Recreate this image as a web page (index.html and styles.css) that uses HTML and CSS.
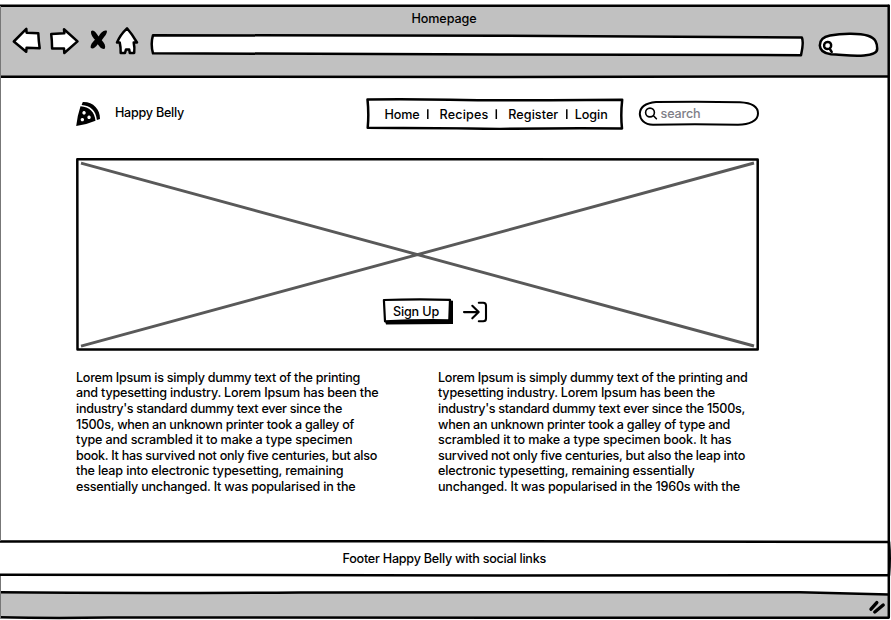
FILE: index.html
```
<!DOCTYPE html>
<html lang="en">
<head>
<meta charset="utf-8">
<title>Homepage</title>
<link rel="stylesheet" href="styles.css">
</head>
<body>
<div class="window">
  <header class="chrome">
    <svg class="outline" viewBox="0 4 891 75"><path class="gray" d="M0 6H888V77H0Z"/><path class="ink" d="M0 5.7H888.5M0 76.7Q200 77.5 500 76.9L888 76.4"/></svg>
    <div class="title"><span data-fit="65">Homepage</span></div>
    <div class="toolbar">
      <svg class="back" viewBox="11 26 31 30"><path class="shape" d="M13.8 41.5L26.3 28.8L26.6 32.7L38.3 33.3Q38.6 41 39.7 48.2L26.6 47.7L26.2 51.8Z"/></svg>
      <svg class="forward" viewBox="49 26 31 30"><path class="shape" d="M51.2 34L64.3 33.3L64 29.2L77.5 41.4L64.3 53L64 48.5L52.1 48.5Q52 40 51.2 34Z"/></svg>
      <svg class="stop" viewBox="90 29 18 21"><path d="M91.2 31C93.5 29 96 32.5 98.6 36.6C101 32 104 29.5 106.9 30.8C107.4 34 104 37 101.8 40.2C104.5 43 106 46 104.8 48.8C101.5 49.6 99.5 46.5 97.7 44.2C95.5 47.5 93 49.3 90.8 48C90.2 44.5 92.8 42 95 39.8C92.3 37 90.4 33.5 91.2 31Z"/></svg>
      <svg class="home" viewBox="115 26 24 30"><path class="shape" d="M127 28.3Q132 34 137 42.5L133.7 42.6Q134.8 47 134.2 53L129.8 53L129.2 49.4L126 49.4L125 53L120.7 53Q120.8 47 119.7 42.4L117 42.5Q120 35 127 28.3Z"/></svg>
      <svg class="address" viewBox="150 32 655 26"><path class="shape" d="M153 35.2L500 35.8Q650 36.3 801.8 37.4Q804 42 801 55.2Q620 55.3 500 54.4Q300 53.2 153 53.3Q150.4 44 153 35.2Z"/></svg>
      <svg class="quick" viewBox="817 31 63 28"><path class="shape" d="M830 35.5C843 33.1 860 33.4 868 35.8C876 38.5 877 43 877.2 48.5C877.5 53 872 54.8 864 55.4C852 56.5 841 54.4 831 54.3C824 53.5 820 50 819.8 45.4C819.7 40 824 36.7 830 35.5Z"/><path class="glass" d="M828 42.1C825 41.9 823.7 43.9 824.2 46.5C825 49.9 830 49.7 831 46.5C831.5 43.9 830.5 42.1 828 42.1M829.5 48.5L831.7 51.9"/></svg>
    </div>
  </header>

  <main class="page">
    <div class="masthead">
      <svg class="logo" viewBox="76 101 25 26"><path d="M82.8 101.9C93 101.5 100.3 109 100 119L96.9 119.9C96 110.5 90.5 105.6 81.6 104.9Z"/><path fill-rule="evenodd" d="M80.5 106.2C89.5 106.8 94.8 112 95.5 120.8Q87 124.6 76.2 126Q77.5 115 80.5 106.2ZM84 111.1a1.7 1.7 0 1 0 .1 0ZM89 115.6a1.7 1.7 0 1 0 .1 0ZM82.3 117.9a1.7 1.7 0 1 0 .1 0Z"/></svg>
      <div class="brand"><span data-fit="69">Happy Belly</span></div>
      <nav class="nav">
        <svg class="outline" viewBox="366 98 258 32"><path class="ink" d="M367.5 99.5Q410 99 450 99.8T550 100.2L622.2 99.7Q620.5 115 622 128.5Q570 127.7 500 129Q440 128 367.7 127.8Q369 114 367.5 99.5Z"/><path class="ticks" d="M427.8 109.3V119M496.3 109.3V119M566.8 109.3V119"/></svg>
        <a class="n1"><span data-fit="35">Home</span></a>
        <a class="n2"><span data-fit="49">Recipes</span></a>
        <a class="n3"><span data-fit="50">Register</span></a>
        <a class="n4"><span data-fit="33">Login</span></a>
      </nav>
      <div class="search">
        <svg class="outline" viewBox="638 100 122 26"><path class="thin" d="M656 102.1Q700 101.5 740 102.2C752 102.8 758 107 758 113.5C758 121 749 124.7 738 124.8Q700 124 653 124.7C644 124.5 640 119 639.8 114C640 106 647 103 656 102.1Z"/><circle class="lens" cx="650" cy="112.5" r="4.4"/><path class="lens" d="M653.5 115.8L656.4 118.7"/></svg>
        <span data-fit="40">search</span>
      </div>
    </div>

    <section class="hero">
      <svg class="outline" viewBox="76 158 683 193"><path class="ink" d="M77.3 159.3Q300 159 757.7 159.4L757.7 349.5Q400 349.2 77.5 349.4Z"/><path class="cross" d="M81 163.2L754 346M81 346.2L754 163"/></svg>
      <button class="signup"><svg class="outline" viewBox="382 298 72 27"><path d="M385 321L449 320V300.5L453 300.8V324L386 324.6Z"/><path class="shape box" d="M383.9 300Q415 299 450 299.8L449.3 320.3Q415 319.8 385 321.3Z"/></svg><span data-fit="46">Sign Up</span></button>
      <svg class="enter" viewBox="462 300 27 24"><path class="thin2" d="M464 312.1H478.5M472.3 305.8L478.7 312.1L472.3 318.3M478.8 302.7H483.2Q486 302.7 486 305.5V318.5Q486 321.3 483.2 321.3H478.8"/></svg>
    </section>

    <div class="columns">
      <p>
        <span data-fit="284">Lorem Ipsum is simply dummy text of the printing</span>
        <span data-fit="302.5">and typesetting industry. Lorem Ipsum has been the</span>
        <span data-fit="266">industry's standard dummy text ever since the</span>
        <span data-fit="278">1500s, when an unknown printer took a galley of</span>
        <span data-fit="276.5">type and scrambled it to make a type specimen</span>
        <span data-fit="301">book. It has survived not only five centuries, but also</span>
        <span data-fit="267.5">the leap into electronic typesetting, remaining</span>
        <span data-fit="279.5">essentially unchanged. It was popularised in the</span>
      </p>
      <p>
        <span data-fit="309.5">Lorem Ipsum is simply dummy text of the printing and</span>
        <span data-fit="277">typesetting industry. Lorem Ipsum has been the</span>
        <span data-fit="307">industry's standard dummy text ever since the 1500s,</span>
        <span data-fit="292">when an unknown printer took a galley of type and</span>
        <span data-fit="293.5">scrambled it to make a type specimen book. It has</span>
        <span data-fit="307">survived not only five centuries, but also the leap into</span>
        <span data-fit="256.5">electronic typesetting, remaining essentially</span>
        <span data-fit="302">unchanged. It was popularised in the 1960s with the</span>
      </p>
    </div>
  </main>

  <footer class="footer">
    <svg class="outline" viewBox="0 540 891 38"><path class="ink" d="M0 541.5L500 541.2L889 541.9Q890.5 558 889 575.3L500 575.4L0 574.7"/></svg>
    <span data-fit="203.5">Footer Happy Belly with social links</span>
  </footer>
  <div class="status">
    <svg class="outline" viewBox="0 590 891 30"><path class="gray" d="M0 592.5H800L888 594.5V617H0Z"/><path class="ink" d="M0 592.3Q130 593.5 300 592.4Q500 591.8 800 592.2L888.7 594.4M0 617.2Q50 618.6 110 617.5Q500 617.6 888 617.8"/><path class="grip" d="M871 609.2L876.8 602.6M874.8 612L883.2 605"/></svg>
  </div>
  <svg class="outline edges" viewBox="0 0 891 620"><path class="left" d="M.5 6V541M.5 576V618"/><path class="ink" d="M888.7 5.7Q888.2 200 888.8 400L888.8 617.5"/></svg>
</div>
<script src="fit.js"></script>
</body>
</html>
```
FILE: styles.css
```
* { box-sizing: border-box; }
body {
  margin: 0;
  background: #fff;
  color: #000;
  font: 540 12.6px/16px Inter, "Noto Sans", sans-serif;
}
svg { display: block; flex: none; fill: #000; }
p { margin: 0; }
span[data-fit] { display: block; width: max-content; white-space: nowrap; }

.window {
  position: relative;
  display: flex;
  flex-direction: column;
  width: 891px;
  height: 620px;
  padding-top: 4px;
  overflow: hidden;
}
.outline { position: absolute; inset: 0; width: 100%; height: 100%; }
.edges { pointer-events: none; }
.ink { fill: none; stroke: #000; stroke-width: 2.5; stroke-linejoin: round; stroke-linecap: round; }
.gray { fill: #c1c1c1; }
.shape { fill: #fff; stroke: #000; stroke-width: 2.5; stroke-linejoin: round; }
.thin { fill: none; stroke: #000; stroke-width: 2; stroke-linecap: round; }
.ticks { fill: none; stroke: #000; stroke-width: 1.5; }
.lens { fill: none; stroke: #000; stroke-width: 1.6; stroke-linecap: round; }
.thin2 { fill: none; stroke: #000; stroke-width: 2.1; stroke-linecap: round; stroke-linejoin: round; }
.glass { fill: none; stroke: #000; stroke-width: 2.5; stroke-linecap: round; }
.cross { fill: none; stroke: #595959; stroke-width: 2.9; }
.left { fill: none; stroke: #777; stroke-width: 1; }
.grip { fill: none; stroke: #000; stroke-width: 3.4; stroke-linecap: round; }
.box { stroke-width: 2.2; }

.chrome { position: relative; height: 75px; padding-top: 7px; }
.title { position: relative; padding-left: 411.5px; }
.toolbar { position: relative; display: flex; align-items: flex-start; height: 30px; padding-left: 11px; }
.back, .forward { width: 31px; height: 30px; margin-top: -1px; }
.forward { margin-left: 7px; }
.stop { width: 18px; height: 21px; margin: 2px 0 0 10px; }
.home { width: 24px; height: 30px; margin: -1px 0 0 7px; }
.address { width: 655px; height: 26px; margin: 5px 0 0 11px; }
.quick { width: 63px; height: 28px; margin: 4px 0 0 12px; }

.page { height: 461px; padding: 19px 0 0 76px; }
.masthead { display: flex; align-items: flex-start; height: 60px; }
.logo { width: 25px; height: 26px; margin-top: 3px; }
.brand { width: 69px; margin: 7px 0 0 14px; }
.nav {
  position: relative;
  display: flex;
  align-items: center;
  width: 258px;
  height: 32px;
  margin-left: 182px;
  padding: 2px 0 0 18.5px;
}
.nav a { position: relative; }
.n2 { margin-left: 20px; }
.n3 { margin-left: 19.8px; }
.n4 { margin-left: 16.4px; }
.search { position: relative; width: 122px; height: 26px; margin: 2px 0 0 14px; padding: 6px 0 0 22.5px; color: #7e7e87; }

.hero { position: relative; display: flex; align-items: flex-start; width: 683px; height: 193px; padding: 140px 0 0 306px; }
.signup {
  position: relative;
  width: 72px;
  height: 27px;
  margin: 0;
  padding: 0 0 0 11px;
  border: 0;
  background: none;
  color: inherit;
  font: inherit;
}
.signup span { position: relative; }
.enter { width: 27px; height: 24px; margin: 2px 0 0 8px; position: relative; }

.columns { display: flex; gap: 56px; margin-top: 18.7px; line-height: 15.62px; }
.columns p { width: 306px; }

.footer { position: relative; height: 38px; padding: 11px 0 0 342.5px; }
.status { position: relative; height: 30px; margin-top: 12px; }
```
FILE: fit.js
```
// Tunes letter spacing so each line of copy keeps its drawn width.
document.querySelectorAll("[data-fit]").forEach(function (line) {
  var gap = parseFloat(line.dataset.fit) - line.getBoundingClientRect().width;
  line.style.letterSpacing = gap / line.textContent.length + "px";
});
```
